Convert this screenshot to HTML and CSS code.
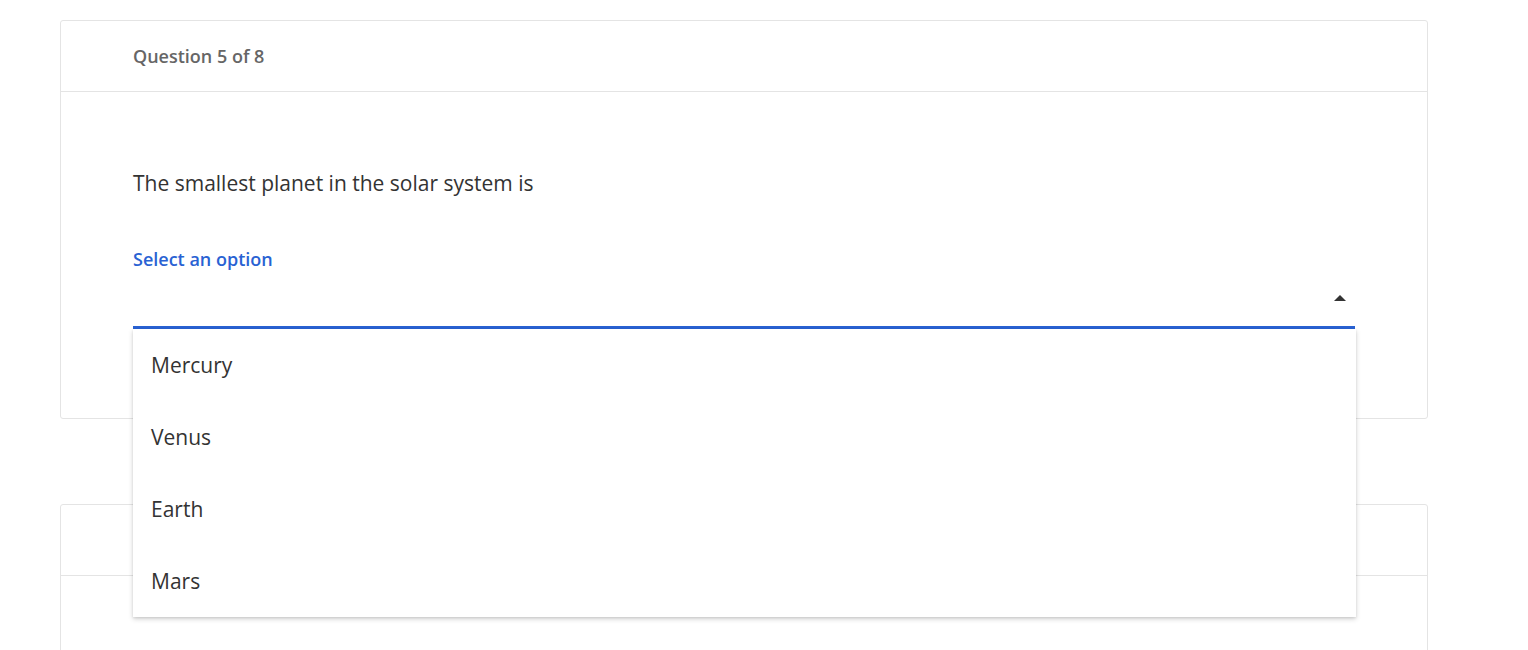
FILE: index.html
```html
<!DOCTYPE html>
<html lang="en">
<head>
<meta charset="utf-8">
<title>Quiz</title>
<link rel="stylesheet" href="styles.css">
</head>
<body>
<main class="page">
  <section class="card">
    <header class="card-header">Question 5 of 8</header>
    <div class="card-body">
      <p class="question">The smallest planet in the solar system is</p>
      <div class="field">
        <label class="field-label">Select an option</label>
        <div class="select-box">
          <span class="arrow"></span>
        </div>
        <ul class="menu">
          <li class="menu-item">Mercury</li>
          <li class="menu-item">Venus</li>
          <li class="menu-item">Earth</li>
          <li class="menu-item">Mars</li>
        </ul>
      </div>
    </div>
  </section>
  <section class="card">
    <header class="card-header"></header>
    <div class="card-body tall"></div>
  </section>
</main>
</body>
</html>
```
FILE: styles.css
```css
* { box-sizing: border-box; }
html, body { margin: 0; padding: 0; background: #fff; }
body {
  font-family: "Open Sans", "Liberation Sans", sans-serif;
  color: #333;
}
.page {
  width: 1368px;
  height: 650px;
  overflow: hidden;
  margin-left: 60px;
  padding-top: 20px;
  display: flex;
  flex-direction: column;
  gap: 85px;
}
.card {
  flex-shrink: 0;
  border: 1px solid #e4e4e4;
  border-radius: 3px;
  background: #fff;
}
.card-header {
  height: 71px;
  border-bottom: 1px solid #e4e4e4;
  padding-left: 72px;
  display: flex;
  align-items: center;
  font-size: 18px;
  font-weight: 600;
  color: #666;
}
.card-body {
  padding: 79px 72px 89px;
}
.card-body.tall { height: 200px; }
.question {
  margin: 0 0 53px;
  font-size: 21px;
  line-height: 24px;
  color: #333;
}
.field { position: relative; }
.field-label {
  display: block;
  font-size: 18px;
  font-weight: 600;
  line-height: 22px;
  color: #2962d3;
}
.select-box {
  height: 59px;
  border-bottom: 3px solid #2962d3;
  display: flex;
  align-items: center;
  justify-content: flex-end;
  padding-right: 9px;
}
.arrow {
  width: 0;
  height: 0;
  border-left: 6px solid transparent;
  border-right: 6px solid transparent;
  border-bottom: 6px solid #333;
}
.menu {
  position: absolute;
  top: 100%;
  left: 0;
  width: calc(100% + 1px);
  margin: 0;
  padding: 0;
  list-style: none;
  background: #fff;
  box-shadow: 0 2px 5px rgba(0,0,0,0.18), 0 1px 2px rgba(0,0,0,0.08);
  z-index: 10;
}
.menu-item {
  height: 72px;
  display: flex;
  align-items: center;
  padding-left: 18px;
  font-size: 21px;
  color: #333;
}
```
